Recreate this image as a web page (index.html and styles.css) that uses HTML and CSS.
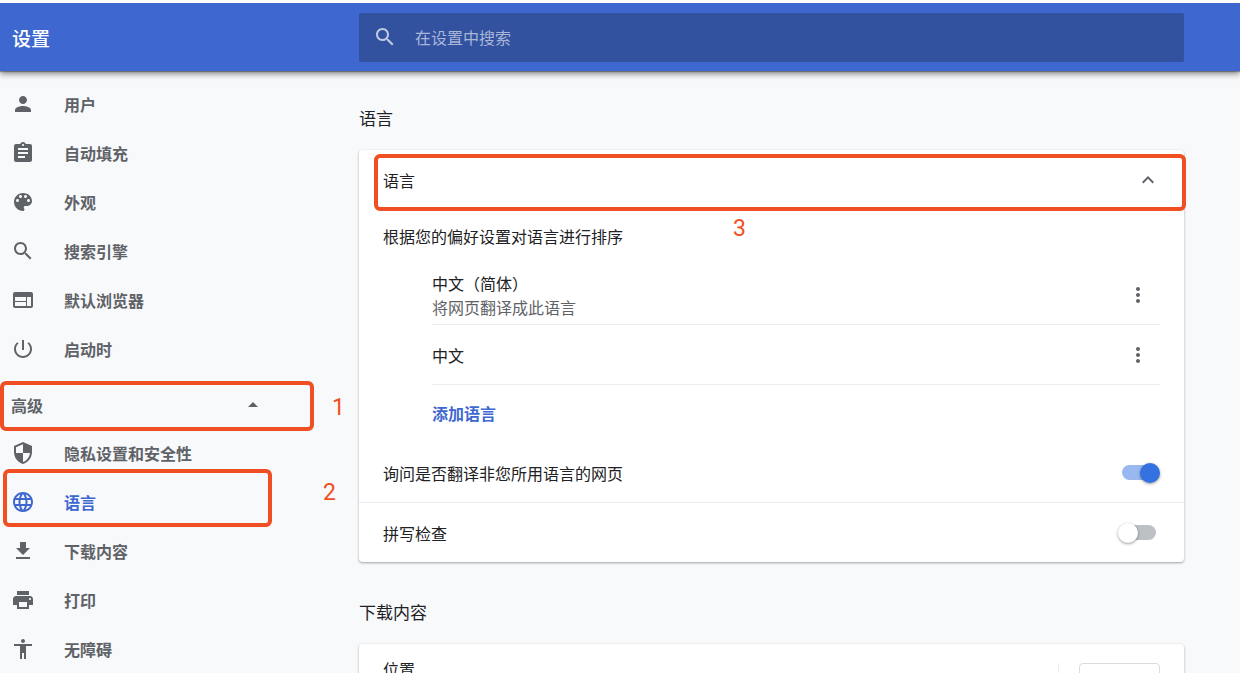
FILE: index.html
```html
<!DOCTYPE html>
<html lang="zh-CN">
<head>
<meta charset="utf-8">
<meta name="viewport" content="width=device-width, initial-scale=1">
<title>设置</title>
<link rel="stylesheet" href="styles.css">
</head>
<body>
<header class="toolbar">
  <h1 class="toolbar-title">设置</h1>
  <label class="search">
    <svg class="icon" viewBox="0 0 24 24" aria-hidden="true"><path d="M15.5 14h-.79l-.28-.27C15.41 12.59 16 11.11 16 9.5 16 5.91 13.09 3 9.5 3S3 5.91 3 9.5 5.91 16 9.5 16c1.61 0 3.09-.59 4.23-1.57l.27.28v.79l5 4.99L20.49 19l-4.99-5zm-6 0C7.01 14 5 11.99 5 9.5S7.01 5 9.5 5 14 7.01 14 9.5 11.99 14 9.5 14z"/></svg>
    <input class="search-input" type="text" placeholder="在设置中搜索" aria-label="在设置中搜索">
  </label>
</header>
<div class="layout">
  <nav class="sidebar">
    <ul class="menu">
      <li><a class="menu-link" href="#people"><svg class="icon" viewBox="0 0 24 24" aria-hidden="true"><path d="M12 12c2.21 0 4-1.79 4-4s-1.79-4-4-4-4 1.79-4 4 1.79 4 4 4zm0 2c-2.67 0-8 1.34-8 4v2h16v-2c0-2.66-5.33-4-8-4z"/></svg>用户</a></li>
      <li><a class="menu-link" href="#autofill"><svg class="icon" viewBox="0 0 24 24" aria-hidden="true"><path d="M19 3h-4.18C14.4 1.84 13.3 1 12 1c-1.3 0-2.4.84-2.82 2H5c-1.1 0-2 .9-2 2v14c0 1.1.9 2 2 2h14c1.1 0 2-.9 2-2V5c0-1.1-.9-2-2-2zm-7 0c.55 0 1 .45 1 1s-.45 1-1 1-1-.45-1-1 .45-1 1-1zm2 14H7v-2h7v2zm3-4H7v-2h10v2zm0-4H7V7h10v2z"/></svg>自动填充</a></li>
      <li><a class="menu-link" href="#appearance"><svg class="icon" viewBox="0 0 24 24" aria-hidden="true"><path d="M12 3c-4.97 0-9 4.03-9 9s4.03 9 9 9c.83 0 1.5-.67 1.5-1.5 0-.39-.15-.74-.39-1.01-.23-.26-.38-.61-.38-.99 0-.83.67-1.5 1.5-1.5H16c2.76 0 5-2.24 5-5 0-4.42-4.03-8-9-8zm-5.500 9c-.83 0-1.500-.67-1.500-1.500S5.670 9 6.500 9 8 9.670 8 10.500 7.330 12 6.500 12zm3-4C8.670 8 8 7.330 8 6.500S8.670 5 9.500 5s1.500.67 1.500 1.500S10.330 8 9.500 8zm5 0c-.83 0-1.500-.67-1.500-1.500S13.670 5 14.500 5s1.500.67 1.500 1.500S15.330 8 14.500 8zm3 4c-.83 0-1.500-.67-1.500-1.500S16.670 9 17.500 9s1.500.67 1.500 1.500-.67 1.500-1.500 1.500z"/></svg>外观</a></li>
      <li><a class="menu-link" href="#search"><svg class="icon" viewBox="0 0 24 24" aria-hidden="true"><path d="M15.5 14h-.79l-.28-.27C15.41 12.59 16 11.11 16 9.5 16 5.91 13.09 3 9.5 3S3 5.91 3 9.5 5.91 16 9.5 16c1.61 0 3.09-.59 4.23-1.57l.27.28v.79l5 4.99L20.49 19l-4.99-5zm-6 0C7.01 14 5 11.99 5 9.5S7.01 5 9.5 5 14 7.01 14 9.5 11.99 14 9.5 14z"/></svg>搜索引擎</a></li>
      <li><a class="menu-link" href="#browser"><svg class="icon" viewBox="0 0 24 24" aria-hidden="true"><path d="M20 4H4c-1.1 0-1.99.9-1.99 2L2 18c0 1.1.9 2 2 2h16c1.1 0 2-.9 2-2V6c0-1.1-.9-2-2-2zm-5 14H4v-4h11v4zm0-5H4V9h11v4zm5 5h-4V9h4v9z"/></svg>默认浏览器</a></li>
      <li><a class="menu-link" href="#startup"><svg class="icon" viewBox="0 0 24 24" aria-hidden="true"><path d="M13 3h-2v10h2V3zm4.83 2.17l-1.42 1.42C17.99 7.86 19 9.81 19 12c0 3.87-3.13 7-7 7s-7-3.13-7-7c0-2.19 1.01-4.14 2.58-5.42L6.17 5.17C4.23 6.82 3 9.26 3 12c0 4.97 4.03 9 9 9s9-4.03 9-9c0-2.74-1.23-5.18-3.17-6.83z"/></svg>启动时</a></li>
    </ul>
    <div class="advanced">
      <button class="advanced-toggle" type="button" aria-expanded="true">高级<svg class="icon" viewBox="0 0 24 24" aria-hidden="true"><path d="M7 14l5-5 5 5z"/></svg></button>
      <span class="mark mark-advanced"></span>
      <span class="step step-advanced">1</span>
    </div>
    <ul class="menu">
      <li><a class="menu-link" href="#privacy"><svg class="icon" viewBox="0 0 24 24" aria-hidden="true"><path d="M12 1L3 5v6c0 5.550 3.840 10.740 9 12 5.160-1.260 9-6.450 9-12V5l-9-4zm0 10.990h7c-.53 4.120-3.280 7.790-7 8.940V12H5V6.300l7-3.110v8.800z"/></svg>隐私设置和安全性</a></li>
      <li class="menu-current">
        <a class="menu-link" href="#languages" aria-current="page"><svg class="icon" viewBox="0 0 24 24" aria-hidden="true"><path d="M11.99 2C6.470 2 2 6.480 2 12s4.470 10 9.990 10C17.520 22 22 17.520 22 12S17.520 2 11.990 2zm6.930 6h-2.950c-.32-1.250-.78-2.450-1.380-3.560 1.840.63 3.370 1.910 4.330 3.560zM12 4.040c.83 1.200 1.480 2.530 1.910 3.960h-3.820c.43-1.430 1.080-2.760 1.910-3.960zM4.260 14C4.100 13.360 4 12.690 4 12s.1-1.360.26-2h3.380c-.08.66-.14 1.320-.14 2 0 .68.06 1.340.14 2H4.260zm.82 2h2.950c.32 1.250.78 2.450 1.380 3.560-1.840-.63-3.370-1.900-4.330-3.560zm2.950-8H5.080c.96-1.660 2.490-2.930 4.330-3.560C8.810 5.550 8.350 6.750 8.030 8zM12 19.960c-.83-1.200-1.480-2.530-1.910-3.960h3.820c-.43 1.430-1.080 2.760-1.910 3.960zM14.340 14H9.660c-.09-.66-.16-1.320-.16-2 0-.68.07-1.350.16-2h4.680c.09.65.16 1.320.16 2 0 .68-.07 1.340-.16 2zm.25 5.560c.6-1.110 1.060-2.310 1.380-3.560h2.950c-.96 1.650-2.490 2.930-4.330 3.560zM16.360 14c.08-.66.14-1.320.14-2 0-.68-.06-1.340-.14-2h3.380c.16.64.26 1.310.26 2s-.1 1.360-.26 2h-3.380z"/></svg>语言</a>
        <span class="mark mark-language"></span>
        <span class="step step-language">2</span>
      </li>
      <li><a class="menu-link" href="#downloads"><svg class="icon" viewBox="0 0 24 24" aria-hidden="true"><path d="M19 9h-4V3H9v6H5l7 7 7-7zM5 18v2h14v-2H5z"/></svg>下载内容</a></li>
      <li><a class="menu-link" href="#printing"><svg class="icon" viewBox="0 0 24 24" aria-hidden="true"><path d="M19 8H5c-1.660 0-3 1.340-3 3v6h4v4h12v-4h4v-6c0-1.660-1.340-3-3-3zm-3 11H8v-5h8v5zm3-7c-.55 0-1-.45-1-1s.45-1 1-1 1 .45 1 1-.45 1-1 1zm-1-9H6v4h12V3z"/></svg>打印</a></li>
      <li><a class="menu-link" href="#accessibility"><svg class="icon" viewBox="0 0 24 24" aria-hidden="true"><path d="M12 2c1.100 0 2 .9 2 2s-.9 2-2 2-2-.9-2-2 .9-2 2-2zm9 7h-6v13h-2v-6h-2v6H9V9H3V7h18v2z"/></svg>无障碍</a></li>
    </ul>
  </nav>
  <main class="content">
    <section class="section" id="languages">
      <h2 class="section-title">语言</h2>
      <div class="card">
        <div class="expander">
          <button class="row expander-button" type="button" aria-expanded="true">语言<svg class="icon" viewBox="0 0 24 24" aria-hidden="true"><path d="M12 8l-6 6 1.410 1.410L12 10.830l4.590 4.580L18 14z"/></svg></button>
          <span class="mark mark-expander"></span>
          <span class="step step-expander">3</span>
        </div>
        <p class="hint">根据您的偏好设置对语言进行排序</p>
        <ul class="languages">
          <li class="language">
            <div>
              <div>中文（简体）</div>
              <div class="secondary">将网页翻译成此语言</div>
            </div>
            <button class="more" type="button" aria-label="更多操作"><svg class="icon" viewBox="0 0 24 24" aria-hidden="true"><path d="M12 8c1.100 0 2-.9 2-2s-.9-2-2-2-2 .9-2 2 .9 2 2 2zm0 2c-1.100 0-2 .9-2 2s.9 2 2 2 2-.9 2-2-.9-2-2-2zm0 6c-1.100 0-2 .9-2 2s.9 2 2 2 2-.9 2-2-.9-2-2-2z"/></svg></button>
          </li>
          <li class="language">
            <div>中文</div>
            <button class="more" type="button" aria-label="更多操作"><svg class="icon" viewBox="0 0 24 24" aria-hidden="true"><path d="M12 8c1.100 0 2-.9 2-2s-.9-2-2-2-2 .9-2 2 .9 2 2 2zm0 2c-1.100 0-2 .9-2 2s.9 2 2 2 2-.9 2-2-.9-2-2-2zm0 6c-1.100 0-2 .9-2 2s.9 2 2 2 2-.9 2-2-.9-2-2-2z"/></svg></button>
          </li>
          <li class="add-language"><a class="link" href="#add">添加语言</a></li>
        </ul>
        <label class="row">询问是否翻译非您所用语言的网页<input class="switch" type="checkbox" checked></label>
        <label class="row row-last">拼写检查<input class="switch" type="checkbox"></label>
      </div>
    </section>
    <section class="section" id="downloads">
      <h2 class="section-title">下载内容</h2>
      <div class="card">
        <div class="location">
          <div>位置</div>
          <div class="location-action"><button class="outlined" type="button" aria-label="更改位置"></button></div>
        </div>
      </div>
    </section>
  </main>
</div>
</body>
</html>
```

FILE: styles.css
```css
* {
  box-sizing: border-box;
}

:root {
  --blue: #3e67d0;
  --text: #202124;
  --muted: #5f6368;
  --line: #ebecee;
  --mark: #f04e23;
  --side: 359px;
  --gutter: 56px;
}

body {
  margin: 0;
  padding-top: 3px;
  height: 100vh;
  overflow: hidden;
  background: #f8f9fb;
  color: var(--text);
  font: 16px/24px "Noto Sans CJK SC", sans-serif;
}

ul,
h1,
h2,
p {
  margin: 0;
  padding: 0;
  list-style: none;
}

button,
input {
  font: inherit;
  color: inherit;
  border: 0;
  padding: 0;
  margin: 0;
  background: none;
}

a {
  color: inherit;
  text-decoration: none;
}

.icon {
  display: block;
  flex: none;
  width: 24px;
  height: 24px;
  fill: currentColor;
}

/* Toolbar */
.toolbar {
  position: relative;
  z-index: 2;
  display: grid;
  grid-template-columns: var(--side) 1fr;
  align-items: center;
  padding: 10px var(--gutter) 9px 0;
  background: var(--blue);
  color: #fff;
  box-shadow: 0 -3px 0 #fff, 0 1px 1px rgba(0, 0, 0, 0.3), 0 3px 6px rgba(0, 0, 0, 0.45);
}

.toolbar-title {
  padding-left: 12px;
  font-size: 19px;
  font-weight: 500;
}

.search {
  display: flex;
  align-items: center;
  gap: 18px;
  height: 49px;
  padding: 0 14px 2px;
  border-radius: 2px;
  background: #3252a0;
  color: #c1cbe3;
}

.search-input {
  flex: 1;
  min-width: 0;
  outline: 0;
}

.search-input::placeholder {
  color: #a9b6d7;
  opacity: 1;
}

/* Sidebar */
.layout {
  display: grid;
  grid-template-columns: var(--side) 1fr;
}

.sidebar {
  padding-top: 8px;
  color: var(--muted);
  font-weight: 600;
}

.menu-link {
  display: flex;
  align-items: center;
  gap: 29px;
  height: 49px;
  padding-left: 11px;
}

.menu-current {
  position: relative;
  color: var(--blue);
}

.advanced {
  position: relative;
  margin-top: 8px;
}

.advanced-toggle {
  display: flex;
  align-items: center;
  justify-content: space-between;
  width: 265px;
  height: 47px;
  padding-left: 11px;
}

/* Numbered highlights */
.mark {
  position: absolute;
  border: 4px solid var(--mark);
  border-radius: 6px;
  pointer-events: none;
}

.step {
  position: absolute;
  color: var(--mark);
  font: 400 23px/24px Roboto, sans-serif;
}

.mark-advanced {
  inset: 0 45px -3px 0;
}

.step-advanced {
  top: 15px;
  right: 14px;
}

.mark-language {
  inset: -8px 87px -1px 3px;
}

.step-language {
  top: 4px;
  right: 23px;
}

.mark-expander {
  inset: 4px -2px -2px 15px;
}

.step-expander {
  top: 67px;
  left: 374px;
}

/* Content */
.content {
  padding: 35px var(--gutter) 0 0;
}

.section {
  margin-bottom: 38px;
}

.section-title {
  margin-bottom: 20px;
  font-size: 17px;
  font-weight: 400;
}

.card {
  border-radius: 4px;
  background: #fff;
  box-shadow: 0 1px 2px rgba(60, 64, 67, 0.3), 0 1px 3px rgba(60, 64, 67, 0.2);
}

.row {
  display: flex;
  align-items: center;
  justify-content: space-between;
  width: 100%;
  min-height: 60px;
  padding: 0 28px 0 24px;
  border-bottom: 1px solid var(--line);
}

.row-last {
  min-height: 59px;
  border-bottom: 0;
}

.expander {
  position: relative;
}

.expander-button {
  min-height: 59px;
  padding-right: 24px;
  border-bottom: 0;
}

.expander-button .icon,
.more {
  color: var(--muted);
}

.hint {
  padding: 15px 24px 17px;
}

.languages {
  padding: 0 24px 0 73px;
}

.language {
  display: flex;
  align-items: center;
  justify-content: space-between;
  min-height: 60px;
  padding-right: 10px;
  border-bottom: 1px solid var(--line);
}

.secondary {
  color: var(--muted);
}

.add-language {
  padding: 16px 0 18px;
}

.link {
  color: var(--blue);
  font-weight: 600;
}

.switch {
  position: relative;
  appearance: none;
  flex: none;
  width: 34px;
  height: 15px;
  border-radius: 8px;
  background: #bdc1c6;
}

.switch::before {
  content: "";
  position: absolute;
  top: -2px;
  left: -4px;
  width: 20px;
  height: 20px;
  border-radius: 50%;
  background: #fff;
  box-shadow: 0 1px 3px rgba(0, 0, 0, 0.4);
}

.switch:checked {
  background: #9ab8f0;
}

.switch:checked::before {
  left: 18px;
  background: #3372e0;
}

.location {
  display: flex;
  justify-content: space-between;
  padding: 13px 24px;
}

.location-action {
  margin-top: 6px;
  padding-left: 20px;
  border-left: 1px solid var(--line);
}

.outlined {
  width: 81px;
  height: 39px;
  border: 1px solid #dadce0;
  border-radius: 4px;
}
```
